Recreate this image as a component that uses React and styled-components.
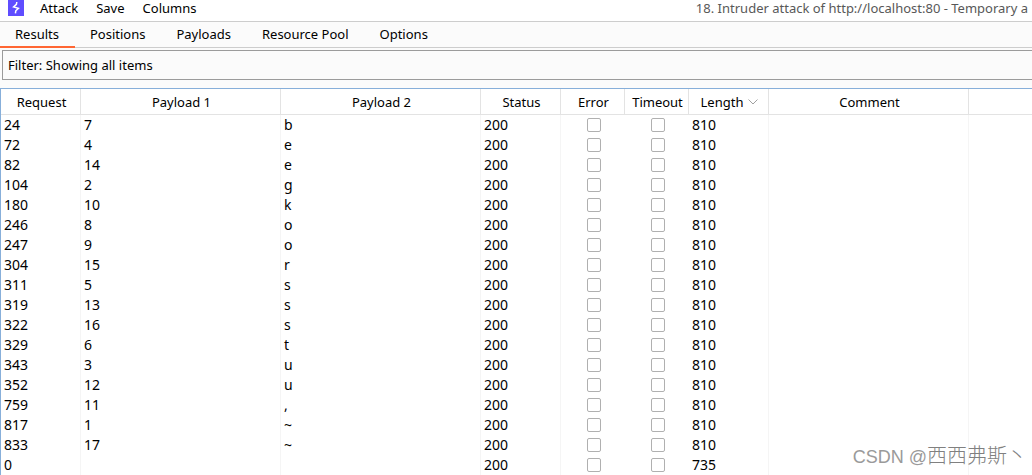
import React, { useState } from "react";
import styled, { createGlobalStyle, ThemeProvider } from "styled-components";

const theme = {
  bg: "#ffffff",
  panel: "#fbfbfb",
  text: "#000000",
  muted: "#585858",
  line: "#cdcdcd",
  fieldLine: "#9b9b9b",
  headLine: "#e3e3e3",
  cellLine: "#f5f5f5",
  focus: "#87afda",
  accent: "#ff6633",
  brand: "#5f4dff",
};

const GlobalStyle = createGlobalStyle`
  * {
    box-sizing: border-box;
  }

  body {
    margin: 0;
    overflow: hidden;
    background: ${theme.bg};
  }

  body,
  button,
  input {
    font-family: "Noto Sans", "Open Sans", sans-serif;
    font-size: 13px;
    line-height: 20px;
    color: ${theme.text};
  }
`;

const Window = styled.div`
  position: relative;
  display: flex;
  flex-direction: column;
  height: 100vh;
  overflow: hidden;
  background: ${({ theme }) => theme.panel};
`;

const MenuBar = styled.header`
  display: flex;
  align-items: flex-start;
  flex-shrink: 0;
  height: 22px;
  padding: 0 4px 0 8px;
  background: ${({ theme }) => theme.bg};
  border-bottom: 1px solid ${({ theme }) => theme.line};
`;

const Logo = styled.svg`
  flex-shrink: 0;
  width: 16px;
  height: 16px;
  margin-right: 16px;
`;

const Menus = styled.nav`
  display: flex;
  gap: 18px;
`;

const MenuButton = styled.button`
  height: 16px;
  padding: 0;
  line-height: 16px;
  border: none;
  background: none;
`;

const Title = styled.div`
  flex: 1;
  line-height: 16px;
  text-align: right;
  white-space: nowrap;
  color: ${({ theme }) => theme.muted};
`;

const Tabs = styled.div`
  display: flex;
  flex-shrink: 0;
  height: 26px;
  box-shadow: inset 0 -1px ${({ theme }) => theme.line};
`;

const Tab = styled.button`
  padding: 0 16px 0 15px;
  border: none;
  border-bottom: 2px solid
    ${({ theme, $active }) => ($active ? theme.accent : "transparent")};
  background: none;
`;

const Filter = styled.input`
  flex-shrink: 0;
  height: 30px;
  margin: 2px 0 8px 2px;
  padding: 0 5px;
  border: 1px solid ${({ theme }) => theme.fieldLine};
  border-right: none;
  border-radius: 0;
  outline: none;
  background: ${({ theme }) => theme.panel};
`;

const TableBox = styled.main`
  flex: 1;
  overflow: hidden;
  background: ${({ theme }) => theme.bg};
  border-top: 1px solid ${({ theme }) => theme.focus};
  border-left: 1px solid ${({ theme }) => theme.focus};
`;

const Table = styled.table`
  width: 100%;
  table-layout: fixed;
  border-collapse: separate;
  border-spacing: 0;
`;

const Col = styled.col`
  width: ${({ $width }) => $width}px;
`;

const HeadCell = styled.th`
  height: 26px;
  padding: 0 0 0 2px;
  font-weight: 400;
  text-align: center;
  white-space: nowrap;
  border-right: 1px solid ${({ theme }) => theme.headLine};
  border-bottom: 1px solid ${({ theme }) => theme.headLine};

  &:last-child {
    border-right: none;
  }
`;

const SortHead = styled.span`
  display: inline-flex;
  align-items: center;
  gap: 5px;
`;

const Cell = styled.td`
  height: 20px;
  padding: 0 3px;
  font-size: 14px;
  line-height: 20px;
  border-right: 1px solid
    ${({ theme, $line }) => ($line ? theme.cellLine : "transparent")};
`;

const CheckCell = styled(Cell)`
  padding: 3px 0 3px 2px;
  text-align: center;
`;

const Check = styled.input`
  appearance: none;
  display: block;
  width: 14px;
  height: 14px;
  margin: 0 auto;
  border: 1px solid #b0b0b0;
  border-radius: 2px;
  background: ${({ theme }) => theme.bg};

  &:checked {
    background: ${({ theme }) => theme.accent};
  }
`;

const Watermark = styled.div`
  position: absolute;
  right: 5px;
  bottom: 4px;
  font-family: "Liberation Sans", sans-serif;
  font-size: 18px;
  line-height: 28px;
  white-space: nowrap;
  color: #9a9a9a;
`;

const WatermarkName = styled.span`
  font-family: "Noto Sans CJK SC", sans-serif;
  font-size: 20px;
  font-weight: 300;
  color: #808080;
`;

const tabs = ["Results", "Positions", "Payloads", "Resource Pool", "Options"];

const columns = [
  { name: "Request", width: 80 },
  { name: "Payload 1", width: 200 },
  { name: "Payload 2", width: 200 },
  { name: "Status", width: 80 },
  { name: "Error", width: 64 },
  { name: "Timeout", width: 64 },
  { name: "Length", width: 80, sorted: true },
  { name: "Comment", width: 200 },
];

// request, payload 1, payload 2, length
const rows = [
  [24, "7", "b", 810],
  [72, "4", "e", 810],
  [82, "14", "e", 810],
  [104, "2", "g", 810],
  [180, "10", "k", 810],
  [246, "8", "o", 810],
  [247, "9", "o", 810],
  [304, "15", "r", 810],
  [311, "5", "s", 810],
  [319, "13", "s", 810],
  [322, "16", "s", 810],
  [329, "6", "t", 810],
  [343, "3", "u", 810],
  [352, "12", "u", 810],
  [759, "11", ",", 810],
  [817, "1", "~", 810],
  [833, "17", "~", 810],
  [0, "", "", 735],
];

const App = () => {
  const [active, setActive] = useState("Results");
  const [filter, setFilter] = useState("Filter: Showing all items");

  return (
    <ThemeProvider theme={theme}>
      <GlobalStyle />
      <Window>
        <MenuBar>
          <Logo viewBox="0 0 16 16">
            <rect width="16" height="16" fill={theme.brand} />
            <path
              d="M8.8 2L8.4 4.4L5.6 7L10.4 8.4L7.8 10.8L7.4 13.4"
              fill="none"
              stroke="#fff"
              strokeWidth="1.5"
            />
          </Logo>
          <Menus>
            <MenuButton>Attack</MenuButton>
            <MenuButton>Save</MenuButton>
            <MenuButton>Columns</MenuButton>
          </Menus>
          <Title>18. Intruder attack of http://localhost:80 - Temporary a</Title>
        </MenuBar>

        <Tabs role="tablist">
          {tabs.map((tab) => (
            <Tab
              key={tab}
              role="tab"
              aria-selected={tab === active}
              $active={tab === active}
              onClick={() => setActive(tab)}
            >
              {tab}
            </Tab>
          ))}
        </Tabs>

        <Filter
          aria-label="Filter"
          value={filter}
          onChange={(e) => setFilter(e.target.value)}
        />

        <TableBox>
          <Table>
            <colgroup>
              {columns.map((c) => (
                <Col key={c.name} $width={c.width} />
              ))}
              <col />
            </colgroup>
            <thead>
              <tr>
                {columns.map((c) => (
                  <HeadCell key={c.name}>
                    {c.sorted ? (
                      <SortHead>
                        {c.name}
                        <svg width="10" height="6" viewBox="0 0 10 6">
                          <path
                            d="M0.5 0.5L5 5L9.5 0.5"
                            fill="none"
                            stroke="#a0a0a0"
                          />
                        </svg>
                      </SortHead>
                    ) : (
                      c.name
                    )}
                  </HeadCell>
                ))}
                <HeadCell />
              </tr>
            </thead>
            <tbody>
              {rows.map(([request, p1, p2, length]) => (
                <tr key={request}>
                  <Cell $line>{request}</Cell>
                  <Cell $line>{p1}</Cell>
                  <Cell $line>{p2}</Cell>
                  <Cell $line>200</Cell>
                  <CheckCell>
                    <Check type="checkbox" aria-label={`Error ${request}`} />
                  </CheckCell>
                  <CheckCell>
                    <Check type="checkbox" aria-label={`Timeout ${request}`} />
                  </CheckCell>
                  <Cell $line>{length}</Cell>
                  <Cell $line />
                  <Cell />
                </tr>
              ))}
            </tbody>
          </Table>
        </TableBox>
        <Watermark>
          CSDN @<WatermarkName>西西弗斯丶</WatermarkName>
        </Watermark>
      </Window>
    </ThemeProvider>
  );
};

export default App;
